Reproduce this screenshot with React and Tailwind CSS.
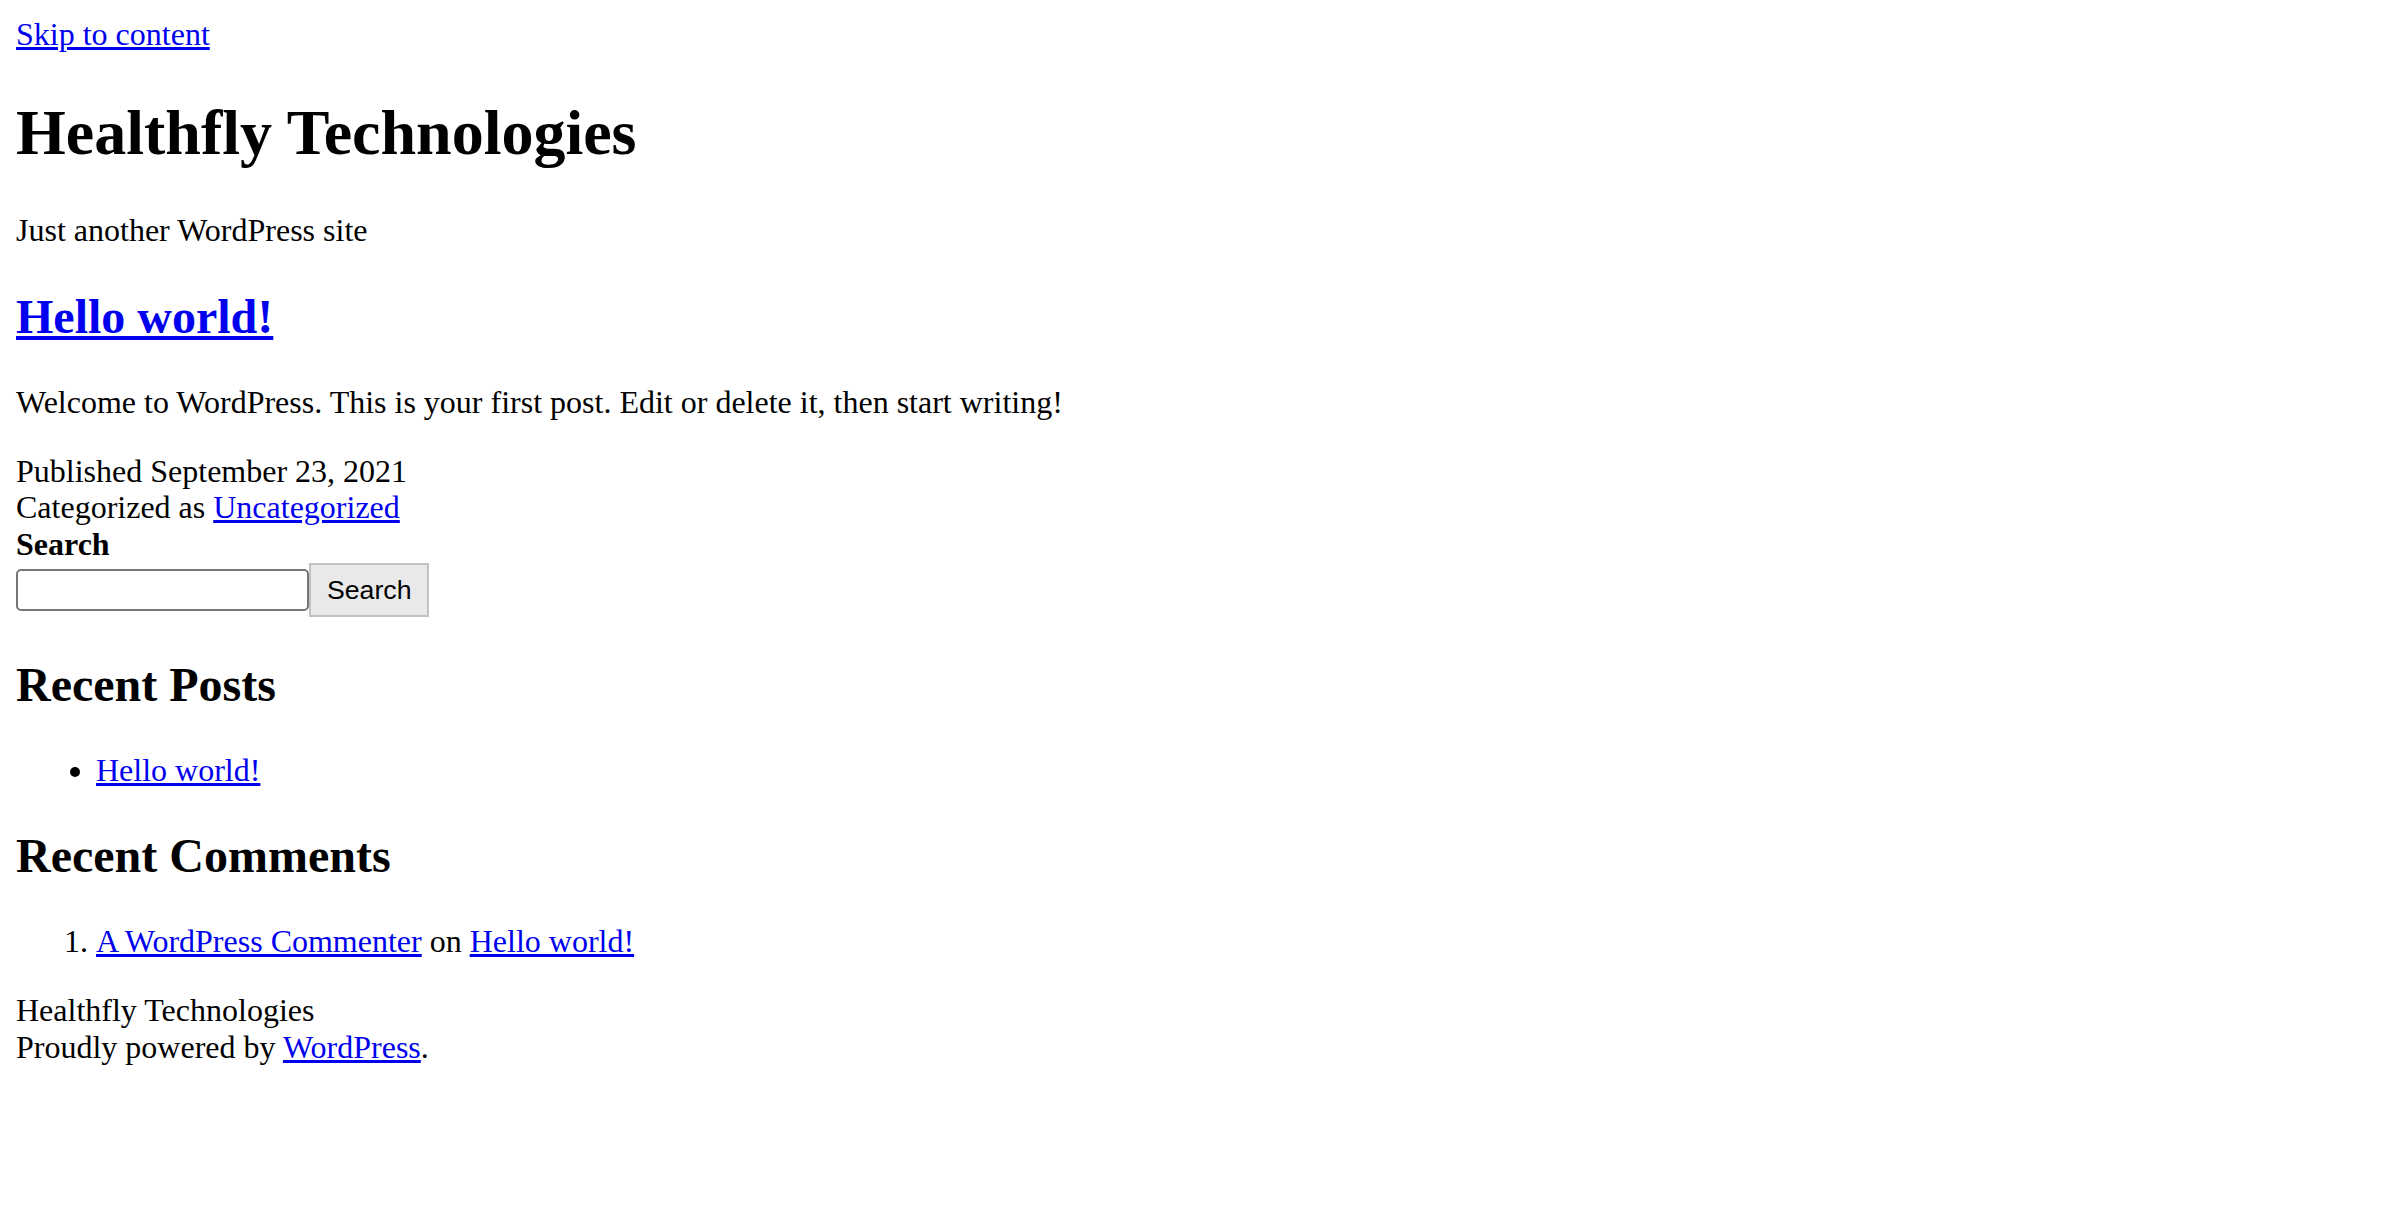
import React from 'react'

const link = 'text-[#0000ee] underline'

const Heading2 = ({ children }) => (
    <h2 className="mt-[39.84px] text-[48px] font-bold leading-[1.15]">
        {children}
    </h2>
)

export default function App() {
    return (
        <div className="min-h-screen bg-white p-[16px] font-['Liberation_Serif',serif] text-[32px] leading-[1.15] text-black">
            <a href="#content" className={link}>
                Skip to content
            </a>

            {/* site header */}
            <header>
                <h1 className="mt-[42.88px] text-[64px] font-bold leading-[1.15]">
                    Healthfly Technologies
                </h1>
                <p className="mt-[42.88px]">Just another WordPress site</p>
            </header>

            <main id="content">
                <article>
                    <Heading2>
                        <a href="#" className={link}>
                            Hello world!
                        </a>
                    </Heading2>
                    <p className="mt-[39.84px]">
                        Welcome to WordPress. This is your first post. Edit or
                        delete it, then start writing!
                    </p>
                    <footer className="mt-[32px]">
                        <div>Published September 23, 2021</div>
                        <div>
                            Categorized as{' '}
                            <a href="#" className={link}>
                                Uncategorized
                            </a>
                        </div>
                    </footer>
                </article>
            </main>

            {/* widgets */}
            <aside>
                <form onSubmit={(e) => e.preventDefault()}>
                    <label htmlFor="search" className="block font-bold">
                        Search
                    </label>
                    <div className="flex items-center">
                        <input
                            id="search"
                            type="search"
                            className="h-[42px] w-[293px] rounded-[5px] border-2 border-[#767676] bg-white px-[4px] text-[26.67px] font-['Liberation_Sans',sans-serif] outline-none"
                        />
                        <button
                            type="submit"
                            className="h-[54px] border-2 border-[#c2c2c2] bg-[#e9e9e9] px-[16px] text-[26.67px] leading-none font-['Liberation_Sans',sans-serif] text-black">
                            Search
                        </button>
                    </div>
                </form>

                <Heading2>Recent Posts</Heading2>
                <ul className="mt-[39.84px] list-disc pl-[80px]">
                    <li>
                        <a href="#" className={link}>
                            Hello world!
                        </a>
                    </li>
                </ul>

                <Heading2>Recent Comments</Heading2>
                <ol className="mt-[39.84px] list-decimal pl-[80px]">
                    <li>
                        <a href="#" className={link}>
                            A WordPress Commenter
                        </a>{' '}
                        on{' '}
                        <a href="#" className={link}>
                            Hello world!
                        </a>
                    </li>
                </ol>
            </aside>

            <footer className="mt-[32px]">
                <div>Healthfly Technologies</div>
                <div>
                    Proudly powered by{' '}
                    <a href="#" className={link}>
                        WordPress
                    </a>
                    .
                </div>
            </footer>
        </div>
    )
}
